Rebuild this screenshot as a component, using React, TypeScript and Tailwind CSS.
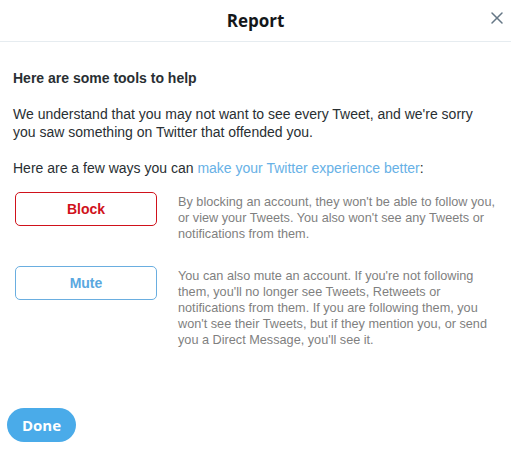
import { X } from 'lucide-react';

const BODY = { fontFamily: '"Liberation Sans", Arial, sans-serif' };
const UI = { fontFamily: '"Open Sans", "Noto Sans", sans-serif' };

function ActionRow({
  label,
  tone,
  children,
}: {
  label: string;
  tone: 'red' | 'blue';
  children: React.ReactNode;
}) {
  const btn =
    tone === 'red'
      ? 'border-[#d0121b] text-[#d0121b]'
      : 'border-[#6aaee0] text-[#5aa8e0]';
  return (
    <div className="flex items-start gap-[21px]">
      <button
        className={`h-[34px] w-[142px] shrink-0 rounded-[5px] border bg-white text-[14px] font-bold ${btn}`}
        style={BODY}
      >
        {label}
      </button>
      <p className="mt-[2px] w-[324px] text-[12.7px] leading-[16px] text-[#7f7f7f]" style={BODY}>
        {children}
      </p>
    </div>
  );
}

export default function App() {
  return (
    <div className="h-[451px] w-[511px] bg-white text-[#292f33]">
      {/* Header */}
      <div className="relative flex h-[42px] items-center justify-center border-b border-[#e6ecf0]">
        <h1 className="text-[17px] font-bold text-[#14171a]" style={UI}>
          Report
        </h1>
        <button className="absolute right-[4px] top-[8px] flex h-[20px] w-[20px] items-center justify-center text-[#657786]">
          <X size={20} strokeWidth={1.8} />
        </button>
      </div>

      {/* Body */}
      <div className="px-[13px] pt-[26px]" style={BODY}>
        <h2 className="text-[14px] font-bold leading-[20px] text-[#292f33]">Here are some tools to help</h2>
        <p className="mt-[17px] text-[14px] leading-[18px]">
          We understand that you may not want to see every Tweet, and we're sorry you saw something on Twitter
          that offended you.
        </p>
        <p className="mt-[18px] text-[14px] leading-[18px]">
          Here are a few ways you can <span className="text-[#67b1e6]">make your Twitter experience better</span>:
        </p>

        <div className="mt-[15px] flex flex-col gap-[24px] pl-[2px]">
          <ActionRow label="Block" tone="red">
            By blocking an account, they won't be able to follow you, or view your Tweets. You also won't see any
            Tweets or notifications from them.
          </ActionRow>
          <ActionRow label="Mute" tone="blue">
            You can also mute an account. If you're not following them, you'll no longer see Tweets, Retweets or
            notifications from them. If you are following them, you won't see their Tweets, but if they mention
            you, or send you a Direct Message, you'll see it.
          </ActionRow>
        </div>
      </div>

      {/* Footer */}
      <div className="mt-[60px] px-[7px]">
        <button
          className="h-[34px] w-[69px] rounded-full bg-[#4aabe9] text-[15px] font-bold text-white"
          style={UI}
        >
          Done
        </button>
      </div>
    </div>
  );
}
